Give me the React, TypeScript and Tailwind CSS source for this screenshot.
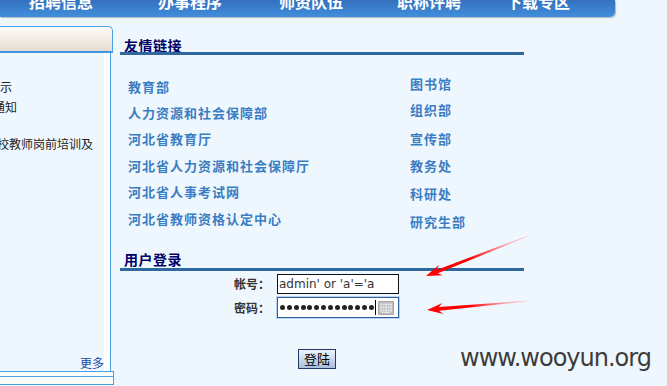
const leftLinks = [
  { t: '教育部', c: 'mt-[25px]' },
  { t: '人力资源和社会保障部', c: 'mt-[12px]' },
  { t: '河北省教育厅', c: 'mt-[12px]' },
  { t: '河北省人力资源和社会保障厅', c: 'mt-[12.5px]' },
  { t: '河北省人事考试网', c: 'mt-[12px]' },
  { t: '河北省教师资格认定中心', c: 'mt-[13.5px]' },
];
const rightLinks = [
  { t: '图书馆', c: 'mt-[22px]' },
  { t: '组织部', c: 'mt-[12px]' },
  { t: '宣传部', c: 'mt-[15px]' },
  { t: '教务处', c: 'mt-[13px]' },
  { t: '科研处', c: 'mt-[14px]' },
  { t: '研究生部', c: 'mt-[14px]' },
];

function KeyboardIcon() {
  return (
    <svg width="16" height="14" viewBox="0 0 16 14">
      <rect x="0" y="0" width="16" height="14" rx="1" fill="#a6a6a6" />
      <rect x="1" y="1" width="14" height="12" fill="#bdbdbd" />
      {[2.5, 5.5, 8.5].map((y) => (
        <g key={y}>
          {[2, 4.5, 7, 9.5, 12].map((x) => (
            <rect key={x} x={x} y={y} width="2" height="2" fill="#e6e6e6" />
          ))}
        </g>
      ))}
      <rect x="4" y="11" width="8" height="1" fill="#e6e6e6" />
    </svg>
  );
}

function Arrows() {
  return (
    <svg className="absolute left-0 top-0 pointer-events-none" width="667" height="386" viewBox="0 0 667 386">
      <defs>
        <linearGradient id="g1" gradientUnits="userSpaceOnUse" x1="528" y1="236" x2="470" y2="259">
          <stop offset="0" stopColor="#ff9a9a" stopOpacity="0.3" />
          <stop offset="1" stopColor="#ff0000" />
        </linearGradient>
        <linearGradient id="g2" gradientUnits="userSpaceOnUse" x1="528" y1="301" x2="470" y2="306">
          <stop offset="0" stopColor="#ff9a9a" stopOpacity="0.3" />
          <stop offset="1" stopColor="#ff0000" />
        </linearGradient>
      </defs>
      <polygon
        fill="url(#g1)"
        points="426,276 438.9,265 436.5,269.9 527.9,235.6 528.1,236.4 437.9,273.3 442.9,275.3"
      />
      <polygon
        fill="url(#g2)"
        points="427,310 442.4,303.1 438.8,307.1 528,300.6 528,301.4 439.1,310.7 443.4,314.1"
      />
    </svg>
  );
}

export default function App() {
  return (
    <div className="relative w-[667px] h-[386px] overflow-hidden bg-[#eff7fe] font-['Noto_Sans_CJK_SC',sans-serif]">
      {/* top nav */}
      <div className="flex w-[615px] h-[17px] overflow-hidden rounded-br-[5px] bg-gradient-to-b from-[#3470bd] to-[#418fdc] shadow-[1px_1px_1px_rgba(0,0,0,0.25)] text-white text-[16px] font-bold leading-[16px]">
        <span className="ml-[29px] -mt-[7px]">招聘信息</span>
        <span className="ml-[65px] -mt-[7px]">办事程序</span>
        <span className="ml-[57px] -mt-[7px]">师资队伍</span>
        <span className="ml-[54px] -mt-[7px]">职称评聘</span>
        <span className="ml-[45px] -mt-[7px]">下载专区</span>
      </div>

      <div className="flex mt-[9px]">
        {/* left panel */}
        <div className="w-[114px] flex flex-col">
          <div className="w-[113px] h-[27px] border-t border-r border-b-2 border-t-[#4aa2e6] border-r-[#4aa2e6] border-b-[#3a98e6] rounded-tr-[5px] bg-gradient-to-b from-[#fffdfa] to-[#e6dbcf]" />
          <div className="flex w-[111px] h-[318px] border-r border-[#4aa2e6]">
            <div className="w-[104px] flex flex-col overflow-hidden whitespace-nowrap text-[12px] leading-[14px] text-[#222]">
              <div className="mt-[27px] ml-[0px]">示</div>
              <div className="mt-[6px] -ml-[7px]">通知</div>
              <div className="mt-[23px] -ml-[3px]">校教师岗前培训及</div>
              <div className="mt-auto mb-[1px] text-right text-[#1a4a9c]">更多</div>
            </div>
            <div className="w-[6px] bg-white" />
          </div>
          <div className="w-[114px] h-[14px] border-t border-r border-b border-[#4aa2e6] bg-white">
            <div className="h-[5px] border-b border-[#4aa2e6]" />
          </div>
        </div>

        {/* main */}
        <div className="ml-[6px] w-[404px] flex flex-col">
          <div className="pt-[12px] pl-[4px] text-[14px] leading-[14px] font-bold text-[#000066] tracking-[0.5px]">友情链接</div>
          <div className="h-[3px] bg-[#30679f]" />
          <div className="flex text-[13px] leading-[14px] font-bold text-[#3a7dc3] tracking-[1px] whitespace-nowrap">
            <div className="w-[290px] pl-[8px] flex flex-col">
              {leftLinks.map((l) => (
                <div key={l.t} className={l.c}>{l.t}</div>
              ))}
            </div>
            <div className="flex flex-col">
              {rightLinks.map((l) => (
                <div key={l.t} className={l.c}>{l.t}</div>
              ))}
            </div>
          </div>
          <div className="mt-[22px] pl-[4px] text-[14px] leading-[16px] font-bold text-[#000066] tracking-[0.5px]">用户登录</div>
          <div className="mt-[1px] h-[3px] bg-[#30679f]" />

          <div className="mt-[3px] flex items-center pl-[114px]">
            <span className="w-[36px] text-[12px] leading-[14px] font-bold text-[#333]">帐号：</span>
            <div className="ml-[7px] w-[122px] h-[20px] border border-[#111] bg-white flex items-center pl-[1px] font-['DejaVu_Sans',sans-serif] text-[12px] text-[#333] whitespace-pre">
              admin' or 'a'='a
            </div>
          </div>
          <div className="mt-[3px] flex items-center pl-[114px]">
            <span className="w-[36px] text-[12px] leading-[14px] font-bold text-[#333]">密码：</span>
            <div className="ml-[7px] w-[122px] h-[21px] border border-[#2d5e9e] shadow-[0_0_0_1px_#b8d3f2] bg-white flex items-center pl-[2px]">
              <div className="flex gap-[1.85px]">
                {Array.from({ length: 14 }).map((_, i) => (
                  <span key={i} className="w-[5px] h-[5px] rounded-full bg-[#222]" />
                ))}
              </div>
              <span className="ml-[1px] w-[1px] h-[15px] bg-black" />
              <span className="ml-auto mr-[4px] flex">
                <KeyboardIcon />
              </span>
            </div>
          </div>
          <div className="mt-[27px] ml-[178px]">
            <button className="w-[38px] h-[20px] border border-[#1f3d66] bg-gradient-to-b from-[#eef3fa] to-[#a9c0dc] text-[13px] leading-[18px] text-black">
              登陆
            </button>
          </div>
        </div>
      </div>

      <div className="absolute left-[460px] top-[346px] font-['DejaVu_Sans',sans-serif] text-[24px] leading-[24px] tracking-[-1px] text-[#3c3c3c]">
        www.wooyun.org
      </div>
      <Arrows />
    </div>
  );
}
